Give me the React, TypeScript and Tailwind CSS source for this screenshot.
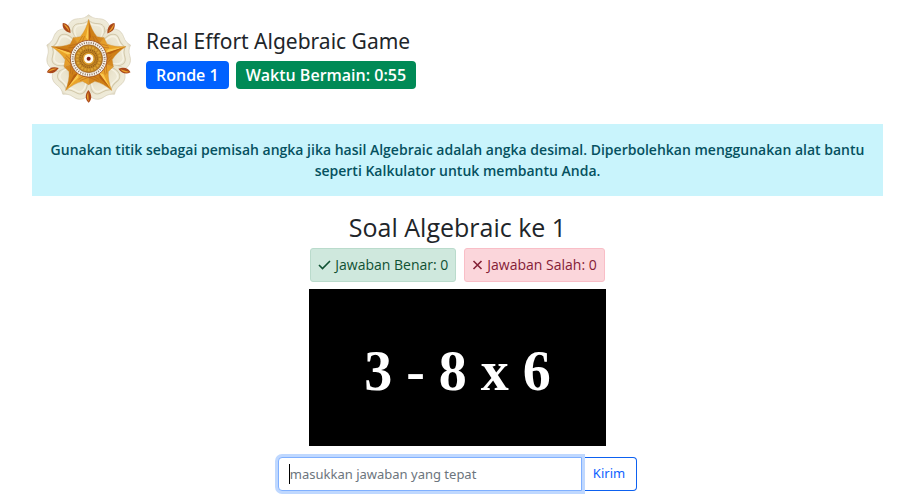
import { useState } from "react";

const turns = [0, 72, 144, 216, 288];
const rays = [-18, -12, 12, 18];

function Emblem() {
  return (
    <svg viewBox="30 24 255 270" className="h-[90px] w-[85px] shrink-0" role="img" aria-label="Logo">
      <defs>
        <radialGradient id="petal" gradientUnits="userSpaceOnUse" cx="158" cy="158" r="132">
          <stop offset="0.4" stopColor="#ddd4b8" />
          <stop offset="0.65" stopColor="#ebe5cf" />
          <stop offset="0.92" stopColor="#efebd9" />
          <stop offset="1" stopColor="#ddd5be" />
        </radialGradient>
        <linearGradient id="gold" x1="0" x2="1" y1="0" y2="0">
          <stop offset="0" stopColor="#e39a28" />
          <stop offset="0.48" stopColor="#eba62a" />
          <stop offset="0.52" stopColor="#cc7c14" />
          <stop offset="1" stopColor="#d98c22" />
        </linearGradient>
      </defs>
      <circle cx="158" cy="158" r="112" fill="#e6dfc8" />
      {turns.map((t) => (
        <g key={t} transform={`rotate(${t} 158 158)`}>
          <path d="M158 158L92 80C94 50 108 38 128 38C142 38 150 33 158 26C166 33 174 38 188 38C208 38 222 50 224 80Z" fill="url(#petal)" stroke="#d0c7ad" strokeWidth="1.5" />
          <path d="M117 96C103 72 110 53 130 53C143 53 151 49 158 43C165 49 173 53 186 53C206 53 213 72 199 96" fill="none" stroke="#d2c8aa" strokeWidth="3" />
          <path d="M123 96C110 74 117 58 133 58C145 58 153 54 158 50C163 54 171 58 183 58C199 58 206 74 193 96" fill="none" stroke="#f6f2e2" strokeWidth="4" />
        </g>
      ))}
      {turns.map((t) => (
        <g key={t} transform={`rotate(${t} 158 158)`}>
          <path d="M158 290C148 281 145 268 157 252C169 267 168 281 158 290Z" fill="#a9471a" />
          <path d="M158 287C152 278 151 270 157 258Z" fill="#eba02c" />
        </g>
      ))}
      {turns.map((t) => (
        <g key={t} transform={`rotate(${t} 158 158)`}>
          <path d="M158 40C164 62 171 78 183 92L204 95L158 158L112 95L133 92C145 78 152 62 158 40Z" fill="url(#gold)" stroke="#c98930" strokeWidth="1" />
          <path d="M158 48L150 94L158 106Z" fill="#fbc951" />
          <path d="M158 48L165 92L158 106Z" fill="#b8600f" />
          {rays.map((r) => (
            <path key={r} d={`M${158 + r} 90L${158 + r * 2} 118`} stroke="#b0611a" strokeWidth="1.5" />
          ))}
        </g>
      ))}
      <circle cx="158" cy="158" r="55" fill="#f9f5ec" stroke="#9a4a1c" strokeWidth="2.5" />
      <circle cx="158" cy="158" r="48" fill="none" stroke="#8f7563" strokeWidth="6" strokeDasharray="3 4" />
      <circle cx="158" cy="158" r="42" fill="#c18421" stroke="#80441b" strokeWidth="1.5" />
      <circle cx="158" cy="158" r="34" fill="none" stroke="#dda334" strokeWidth="7" strokeDasharray="6 4" />
      <circle cx="158" cy="158" r="26" fill="none" stroke="#8f5a18" strokeWidth="4" strokeDasharray="3 3" />
      <circle cx="158" cy="158" r="20" fill="#dc9d29" stroke="#8a4e18" strokeWidth="2" />
      <circle cx="158" cy="158" r="14" fill="#fffaf0" />
      <circle cx="158" cy="158" r="6" fill="#7d1d18" />
    </svg>
  );
}

export default function App() {
  const [answer, setAnswer] = useState("");
  return (
    <main className="bg-white pt-3.5 pr-[23px] pb-2 pl-8 font-['Segoe_UI','Open_Sans','Noto_Sans',sans-serif] text-[#212529]">
      <header className="flex pl-3.5">
        <Emblem />
        <div className="ml-[15px] pt-3">
          <h1 className="font-['Segoe_UI','Noto_Sans',sans-serif] text-[21px] leading-[30px]">Real Effort Algebraic Game</h1>
          <div className="mt-[5px] flex gap-[7px] text-[16px] leading-7 font-semibold text-white">
            <span className="rounded bg-[#0061ff] px-2.5">Ronde 1</span>
            <span className="rounded bg-[#008a56] px-2.5">Waktu Bermain: 0:55</span>
          </div>
        </div>
      </header>

      <p className="mt-5 bg-[#c9f4fc] px-4 py-[15px] text-center text-[14px] leading-[21px] font-semibold text-[#055160]">
        Gunakan titik sebagai pemisah angka jika hasil Algebraic adalah angka desimal. Diperbolehkan menggunakan alat bantu
        seperti Kalkulator untuk membantu Anda.
      </p>

      <section className="flex flex-col items-center">
        <h2 className="mt-4 text-[25px] leading-[30px]">Soal Algebraic ke 1</h2>
        <div className="mt-1.5 flex gap-2 text-[14px] leading-8 font-medium">
          <span className="flex items-center gap-1 rounded-[3px] border border-[#badbcc] bg-[#cfe8dd] px-[7px] text-[#0f5132]">
            <svg viewBox="0 0 13 12" className="h-3 w-[13px]" fill="none" stroke="currentColor" strokeWidth="1.6" aria-hidden="true">
              <path d="M1 6L4.5 9.5L12 2" />
            </svg>
            Jawaban Benar: 0
          </span>
          <span className="flex items-center gap-1 rounded-[3px] border border-[#f9bec7] bg-[#fbd6db] px-[7px] text-[#842036]">
            <svg viewBox="0 0 11 12" className="h-3 w-[11px]" fill="none" stroke="currentColor" strokeWidth="1.6" aria-hidden="true">
              <path d="M1.5 2L9.5 10M9.5 2L1.5 10" />
            </svg>
            Jawaban Salah: 0
          </span>
        </div>
        <div className="mt-[7px] bg-black px-[55px] pt-[52px] pb-11 font-['Liberation_Serif',serif] text-[56px] leading-[61px] font-bold text-white">
          3 - 8 x 6
        </div>
        <form className="mt-[11px] flex font-['Segoe_UI','Noto_Sans',sans-serif] text-[13px]" onSubmit={(e) => e.preventDefault()}>
          <div className="relative">
            <input
              aria-label="Jawaban"
              value={answer}
              onChange={(e) => setAnswer(e.target.value)}
              placeholder="masukkan jawaban yang tepat"
              className="h-[34px] w-[304px] rounded-l border border-[#80b0ff] bg-white px-[11px] ring-3 ring-[#bfd8ff] outline-none placeholder:text-[#6c757d]"
            />
            <span className="absolute top-[7px] left-[11px] h-5 w-px bg-black" aria-hidden="true" />
          </div>
          <button type="submit" className="h-[34px] rounded-r border border-l-0 border-[#0d61f0] px-[11px] text-[#0d61ff]">
            Kirim
          </button>
        </form>
      </section>
    </main>
  );
}
